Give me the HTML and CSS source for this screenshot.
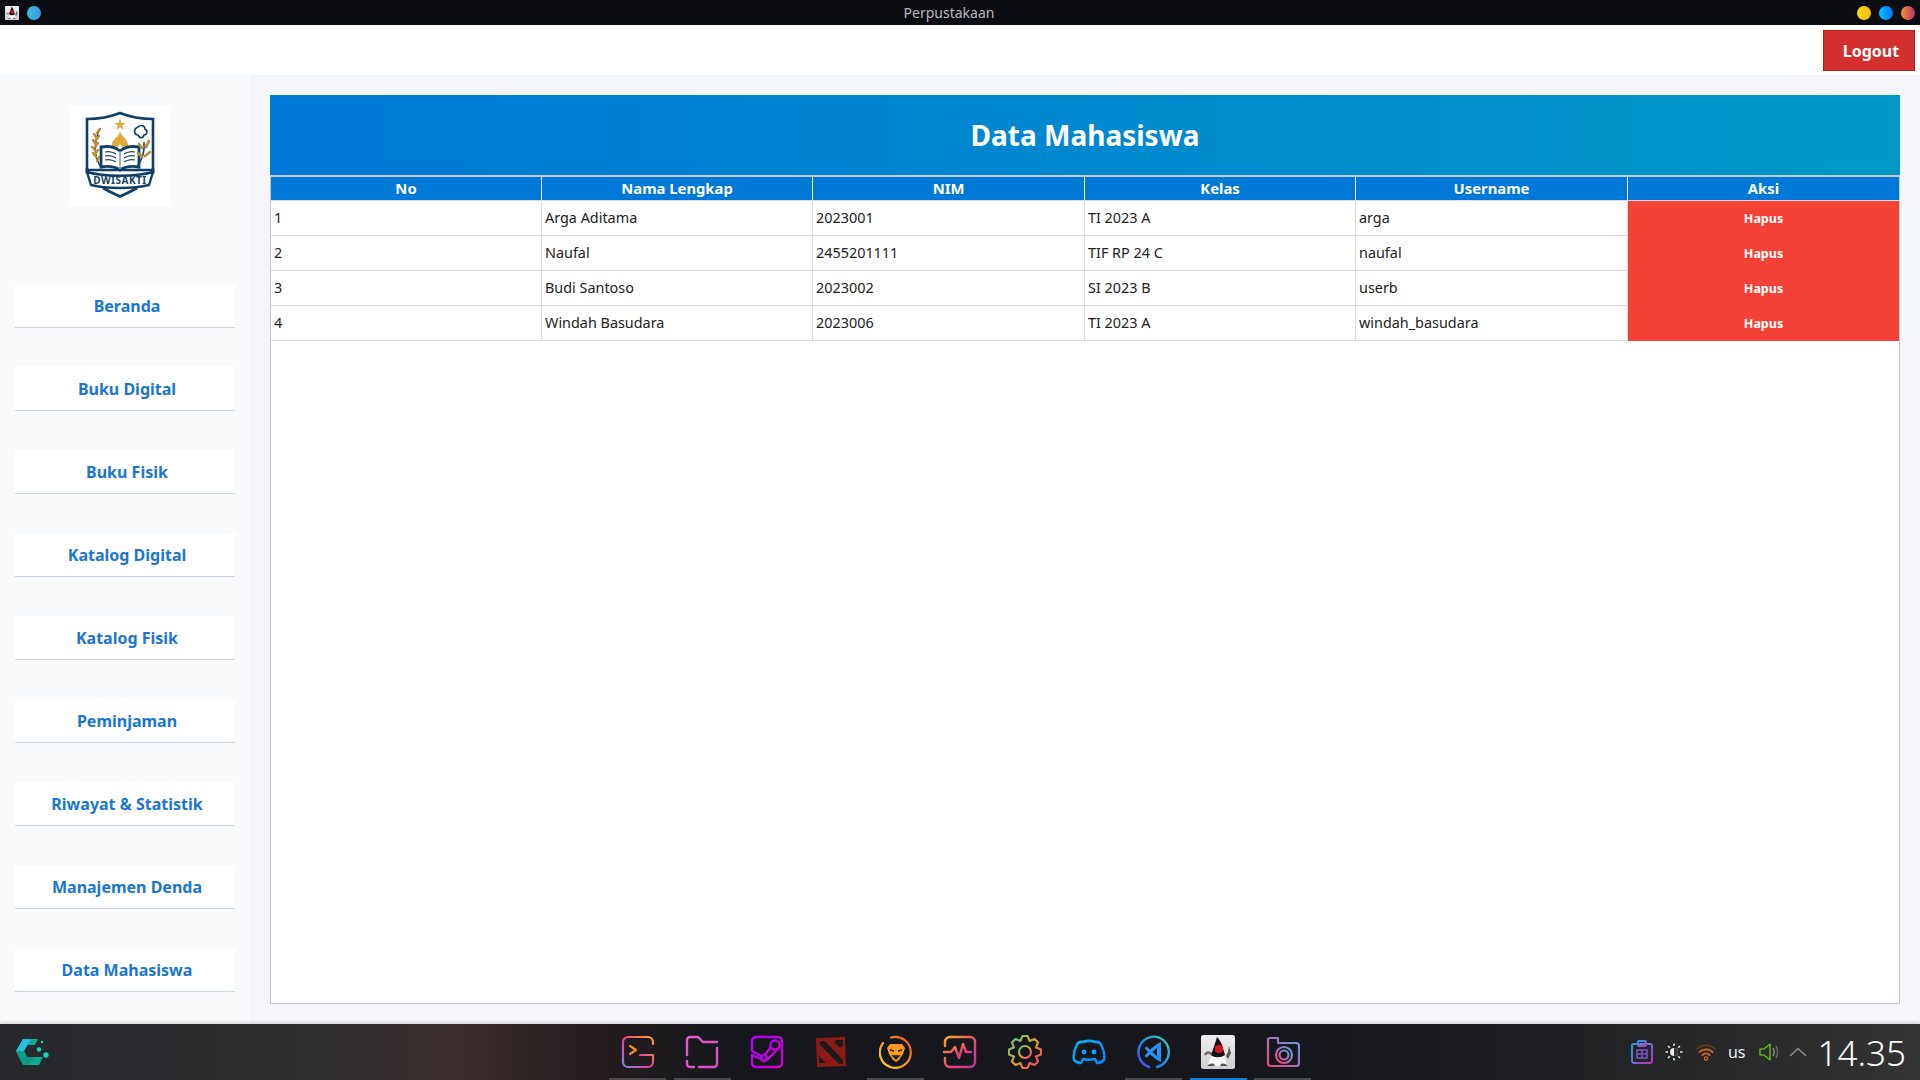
FILE: index.html
```html
<!DOCTYPE html>
<html lang="en">
<head>
    <meta charset="UTF-8">
    <title>Perpustakaan</title>
    <link rel="stylesheet" href="styles.css">
</head>
<body>
    <svg class="svg-defs" aria-hidden="true">
        <defs>
            <linearGradient id="g-term" x1="0" y1="1" x2="1" y2="0"><stop offset="0" stop-color="#7b8cf0"/><stop offset="0.45" stop-color="#e83e9c"/><stop offset="1" stop-color="#f9a825"/></linearGradient>
            <linearGradient id="g-pink" x1="0" y1="0" x2="1" y2="1"><stop offset="0" stop-color="#e85fd0"/><stop offset="1" stop-color="#d94fc0"/></linearGradient>
            <linearGradient id="g-steam" x1="0" y1="0" x2="1" y2="1"><stop offset="0" stop-color="#b400ff"/><stop offset="1" stop-color="#d000d0"/></linearGradient>
            <linearGradient id="g-brave" x1="0" y1="1" x2="1" y2="0"><stop offset="0" stop-color="#fdd835"/><stop offset="1" stop-color="#f4511e"/></linearGradient>
            <linearGradient id="g-pulse" x1="0" y1="0" x2="1" y2="1"><stop offset="0" stop-color="#f9a825"/><stop offset="0.5" stop-color="#f0506e"/><stop offset="1" stop-color="#c2309c"/></linearGradient>
            <linearGradient id="g-gear" x1="0" y1="0" x2="1" y2="1"><stop offset="0" stop-color="#3ecf8e"/><stop offset="0.5" stop-color="#e0a030"/><stop offset="1" stop-color="#f0386b"/></linearGradient>
            <linearGradient id="g-disc" x1="0" y1="0" x2="1" y2="1"><stop offset="0" stop-color="#00b8f0"/><stop offset="1" stop-color="#1080ff"/></linearGradient>
            <linearGradient id="g-code" x1="0" y1="1" x2="1" y2="0"><stop offset="0" stop-color="#5a3df0"/><stop offset="0.5" stop-color="#2090f0"/><stop offset="1" stop-color="#40d0b0"/></linearGradient>
            <linearGradient id="g-cam" x1="0" y1="1" x2="1" y2="0"><stop offset="0" stop-color="#f0457a"/><stop offset="1" stop-color="#5aa0e8"/></linearGradient>
            <linearGradient id="g-clip" x1="0" y1="0" x2="1" y2="1"><stop offset="0" stop-color="#2aa0d8"/><stop offset="1" stop-color="#c030c0"/></linearGradient>
            <linearGradient id="g-face" x1="0" y1="0" x2="0" y2="1"><stop offset="0" stop-color="#eeeeee"/><stop offset="1" stop-color="#cfcfcf"/></linearGradient>
            <symbol id="duke" viewBox="0 0 34 34">
                <rect width="34" height="34" rx="2.500" fill="url(#g-face)"/>
                <path d="M3 19 C5 15.500 9 15.500 11 18 L10 20 C8 18.500 6 18.500 4.500 21 Z" fill="#707070"/>
                <path d="M28 11 L30 18 L27 24 L25 21 L27 17 Z" fill="#555"/>
                <path d="M11 20 C9 25 7 28 6 31 H27 C25 28 24 24 23 20 Z" fill="#f6f6f6"/>
                <path d="M6 31 C8 29 10 28 13 29 L14 31 Z M27 31 C25 29 23 28 20 29 L19 31 Z" fill="#555"/>
                <path d="M16 2 C18 4 20 7 21 10 L24 20 C20 23 13 23 10 20 C12 15 14 8 16 2 Z" fill="#141414"/>
                <circle cx="18" cy="14" r="4.300" fill="#d8101c"/>
            </symbol>
        </defs>
    </svg>

    <div class="titlebar">
        <div class="tb-left">
            <svg class="tb-app"><use href="#duke"/></svg>
            <span class="tb-dot tb-dot-blue"></span>
        </div>
        <div class="tb-title">Perpustakaan</div>
        <div class="tb-right">
            <span class="tb-dot tb-dot-yellow"></span>
            <span class="tb-dot tb-dot-azure"></span>
            <span class="tb-dot tb-dot-red"></span>
        </div>
    </div>

    <div class="header">
        <button class="logout">Logout</button>
    </div>

    <div class="main">
        <div class="sidebar">
            <div class="logo-box">
                <svg class="logo" viewBox="0 0 100 100">
                    <path d="M50 7 C60 11 72 13 83 13 V64 L17 64 V13 C28 13 40 11 50 7 Z" fill="#fff" stroke="#123f68" stroke-width="2.600"/>
                    <path d="M17 62 V68 M83 62 V68" stroke="#123f68" stroke-width="2.600"/>
                    <path d="M50 12.500 L51.400 17 H56 L52.300 19.600 L53.600 24 L50 21.300 L46.400 24 L47.700 19.600 L44 17 H48.600 Z" fill="#e0a93f"/>
                    <path d="M50 25 C51 30 57 32 58 38 C58.500 42 55 44 53 46 C53.500 42 52 40 50 38 C48 40 46.500 42 47 46 C45 44 41.500 42 42 38 C42.500 34 45 34 46 31 C47 32 49 29 50 25 Z" fill="#e0a93f"/>
                    <path d="M50 45 C44 40 37 40 31 41 V61 C37 60 44 60 50 64 C56 60 63 60 69 61 V41 C63 40 56 40 50 45 Z" fill="#fff" stroke="#123f68" stroke-width="2.800"/>
                    <path d="M50 45 V63" stroke="#8aa0b4" stroke-width="1.600"/>
                    <path d="M35 46 C39 45 43 46 46 48 M35 50 C39 49 43 50 46 52 M35 54 C39 53 43 54 46 56 M65 46 C61 45 57 46 54 48 M65 50 C61 49 57 50 54 52 M65 54 C61 53 57 54 54 56" fill="none" stroke="#123f68" stroke-width="1.200"/>
                    <path d="M30 22 C25 34 23 48 30 60" fill="none" stroke="#123f68" stroke-width="1.400"/>
                    <path d="M30 23 L27 27 M24 28 L26 31 M29 30 L26 34 M23 34 L25 37 M28 37 L25 41 M22 41 L25 44 M28 44 L25 48 M23 47 L26 51 M29 51 L27 55" fill="none" stroke="#b98f3a" stroke-width="2.400" stroke-linecap="round"/>
                    <path d="M74 36 C75 46 72 54 67 61" fill="none" stroke="#123f68" stroke-width="1.500"/>
                    <path d="M68 21 C71 18 75 20 75 23 C78 24 77 29 74 29 C73 33 69 32 68 29 C64 29 63 23 68 21 Z" fill="#fff" stroke="#123f68" stroke-width="1.700"/>
                    <path d="M69 38 L72 42 M79 35 L76 41 M80 46 L75 50 M68 47 L72 51" fill="none" stroke="#b98f3a" stroke-width="2.800" stroke-linecap="round"/>
                    <path d="M33 82 C40 86 45 88 50 90.500 C55 88 60 86 67 82" fill="none" stroke="#123f68" stroke-width="2.800"/>
                    <path d="M17 66 C34 71 66 71 83 66 L79 79 C64 83 36 83 21 79 Z" fill="#fff" stroke="#123f68" stroke-width="2.400"/>
                    <text x="50" y="77.500" class="logo-text" text-anchor="middle">DWISAKTI</text>
                </svg>
            </div>
            <nav class="nav">
                <a class="nav-item">Beranda</a>
                <a class="nav-item">Buku Digital</a>
                <a class="nav-item">Buku Fisik</a>
                <a class="nav-item">Katalog Digital</a>
                <a class="nav-item">Katalog Fisik</a>
                <a class="nav-item">Peminjaman</a>
                <a class="nav-item">Riwayat &amp; Statistik</a>
                <a class="nav-item">Manajemen Denda</a>
                <a class="nav-item">Data Mahasiswa</a>
            </nav>
        </div>

        <div class="content">
            <div class="banner"><h1>Data Mahasiswa</h1></div>
            <div class="panel">
                <table>
                    <colgroup>
                        <col class="col-a"><col class="col-a"><col class="col-b"><col class="col-a"><col class="col-b"><col class="col-a">
                    </colgroup>
                    <thead>
                        <tr><th>No</th><th>Nama Lengkap</th><th>NIM</th><th>Kelas</th><th>Username</th><th>Aksi</th></tr>
                    </thead>
                    <tbody>
                        <tr><td>1</td><td>Arga Aditama</td><td>2023001</td><td>TI 2023 A</td><td>arga</td><td class="aksi">Hapus</td></tr>
                        <tr><td>2</td><td>Naufal</td><td>2455201111</td><td>TIF RP 24 C</td><td>naufal</td><td class="aksi">Hapus</td></tr>
                        <tr><td>3</td><td>Budi Santoso</td><td>2023002</td><td>SI 2023 B</td><td>userb</td><td class="aksi">Hapus</td></tr>
                        <tr><td>4</td><td>Windah Basudara</td><td>2023006</td><td>TI 2023 A</td><td>windah_basudara</td><td class="aksi">Hapus</td></tr>
                    </tbody>
                </table>
            </div>
        </div>
    </div>

    <div class="dock">
        <div class="dock-left">
            <svg class="dock-logo" viewBox="0 0 34 26">
                <path d="M0 12 L7 0 H22 L19 6 H11 L8 12 L11 18 H27 L23 26 H7 Z" fill="#12a890"/>
                <path d="M0 12 L7 0 H15 L8 12 Z" fill="#22bfe0"/>
                <path d="M8 12 L11 18 H20 L12 26 H7 L0 12 Z" fill="#0d9a84"/>
                <circle cx="23" cy="10.500" r="2.200" fill="#12d8b8"/>
                <circle cx="30" cy="16" r="2.700" fill="#12d8b8"/>
                <circle cx="26" cy="3" r="1.200" fill="#12d8b8"/>
            </svg>
        </div>
        <div class="dock-apps">
            <div class="app on">
                <svg viewBox="0 0 34 34" fill="none" stroke="url(#g-term)" stroke-width="2.200" stroke-linecap="round" stroke-linejoin="round">
                    <path d="M32 9 V7 A5 5 0 0 0 27 2 H7 A5 5 0 0 0 2 7 V27 A5 5 0 0 0 7 32 H27 A5 5 0 0 0 32 27 V20 H19"/>
                    <path d="M9 11 L15 15 L9 19" stroke="#f58a2a"/>
                </svg>
            </div>
            <div class="app on">
                <svg viewBox="0 0 34 34" fill="none" stroke="url(#g-pink)" stroke-width="2.400" stroke-linecap="round" stroke-linejoin="round">
                    <path d="M2 20 V5 A3 3 0 0 1 5 2 H13 L18 7 H32"/>
                    <path d="M32 13 V29 A3 3 0 0 1 29 32 H14 M9 32 H5 A3 3 0 0 1 2 29 V26"/>
                </svg>
            </div>
            <div class="app">
                <svg viewBox="0 0 34 34" fill="none" stroke="url(#g-steam)" stroke-width="2.400" stroke-linejoin="round">
                    <path d="M2 16 V6 A4 4 0 0 1 6 2 H28 A4 4 0 0 1 32 6 V28 A4 4 0 0 1 28 32 H6 A4 4 0 0 1 2 28 V20 L11 24"/>
                    <circle cx="25" cy="10" r="4.500"/>
                    <circle cx="14" cy="23" r="3"/>
                    <path d="M2 16 L11 21 M21 12 L15 20 M28 14 L17 25"/>
                </svg>
            </div>
            <div class="app">
                <svg viewBox="0 0 34 34">
                    <path d="M2 3 L31 2 L32 31 L3 32 Z" fill="#8e1a16"/>
                    <path d="M7 6 H11 L29 25 V29 H25 L5 9 Z M22 5 H29 V11 L26 13 L20 7 Z M5 21 L8 24 L12 28 H5 Z" fill="#1d1a1c"/>
                </svg>
            </div>
            <div class="app on">
                <svg viewBox="0 0 34 34">
                    <path d="M12 2.500 A15.500 15.500 0 1 1 4 8" fill="none" stroke="url(#g-brave)" stroke-width="2.200" stroke-linecap="round"/>
                    <path d="M11 9 H23 L26 13 L24 19 L20 25 L17 27 L14 25 L10 19 L8 13 Z" fill="#f79a1e"/>
                    <path d="M11 15 L15 16 M23 15 L19 16 M14 21 H20 L17 24 Z" stroke="#26201c" stroke-width="1.400" fill="#26201c"/>
                </svg>
            </div>
            <div class="app">
                <svg viewBox="0 0 34 34" fill="none" stroke="url(#g-pulse)" stroke-width="2.400" stroke-linecap="round" stroke-linejoin="round">
                    <path d="M2 11 V7 A5 5 0 0 1 7 2 H27 A5 5 0 0 1 32 7 V27 A5 5 0 0 1 27 32 H7 A5 5 0 0 1 2 27 V23"/>
                    <path d="M1 17 H8 L12 12 L16 23 L20 9 L23 17 H28"/>
                </svg>
            </div>
            <div class="app">
                <svg viewBox="0 0 34 34" fill="none" stroke="url(#g-gear)" stroke-width="2.200" stroke-linejoin="round">
                    <path d="M12.400 5.900 L14.500 1 H19.500 L21.600 5.900 L26.550 3.920 L30.080 7.450 L28.100 12.400 L33 14.500 V19.500 L28.100 21.600 L30.080 26.550 L26.550 30.080 L21.600 28.100 L19.500 33 H14.500 L12.400 28.100 L7.450 30.080 L3.920 26.550 L5.900 21.600 L1 19.500 V14.500 L5.900 12.400 L3.920 7.450 L7.450 3.920 Z"/>
                    <circle cx="17" cy="17" r="6"/>
                </svg>
            </div>
            <div class="app">
                <svg viewBox="0 0 34 34" fill="none" stroke="url(#g-disc)" stroke-width="2.500" stroke-linejoin="round">
                    <path d="M11 7 C15 5.500 19 5.500 23 7 C26 6.500 27.500 7 29 9.500 C32 15 33 20 32 25 C30 27 27 28 25 28 L23 24 C19 25 15 25 11 24 L9 28 C7 28 4 27 2 25 C1 20 2 15 5 9.500 C6.500 7 8 6.500 11 7 Z"/>
                    <circle cx="12" cy="17" r="2.400" fill="#10a0f8" stroke="none"/>
                    <circle cx="22" cy="17" r="2.400" fill="#10a0f8" stroke="none"/>
                </svg>
            </div>
            <div class="app on">
                <svg viewBox="0 0 34 34">
                    <path d="M12 32 A15.500 15.500 0 0 1 22 2.500 A15.500 15.500 0 0 1 20 32" fill="none" stroke="url(#g-code)" stroke-width="2.400" stroke-linecap="round"/>
                    <path d="M24 7 V27 L20 25 L13 19.500 L9.500 22.500 L7.500 21 L11 17 L7.500 13 L9.500 11.500 L13 14.500 L20 9 Z M20 13 L15.500 17 L20 21 Z" fill="#2a90f0" fill-rule="evenodd"/>
                </svg>
            </div>
            <div class="app on-blue">
                <svg viewBox="0 0 34 34"><use href="#duke"/></svg>
            </div>
            <div class="app on">
                <svg viewBox="0 0 34 34" fill="none" stroke="url(#g-cam)" stroke-width="2.200" stroke-linejoin="round">
                    <path d="M2 9 V5 A2 2 0 0 1 4 3 H12 V8 H30 A3 3 0 0 1 33 11 V28 A3 3 0 0 1 30 31 H5 A3 3 0 0 1 2 28 Z"/>
                    <circle cx="18" cy="20" r="8"/>
                    <circle cx="18" cy="20" r="4.500"/>
                    <path d="M6 13 H11"/>
                </svg>
            </div>
        </div>
        <div class="dock-tray">
            <svg class="tray-clip" viewBox="0 0 22 24" fill="none" stroke="url(#g-clip)" stroke-width="2">
                <rect x="1" y="4" width="20" height="19" rx="2"/>
                <rect x="7" y="1" width="8" height="5" rx="1"/>
                <path d="M6 10 H16 V18 H6 Z M11 10 V18 M6 14 H16" stroke-width="1.500" stroke="#7a55c8"/>
            </svg>
            <svg class="tray-sun" viewBox="0 0 18 18">
                <circle cx="9" cy="9" r="4" fill="#e8e8e8"/>
                <path d="M9 5 A4 4 0 0 1 9 13 Z" fill="#333"/>
                <path d="M9 0.500 V3 M9 15 V17.500 M0.500 9 H3 M15 9 H17.500 M3 3 L4.800 4.800 M13.200 13.200 L15 15 M3 15 L4.800 13.200 M13.200 4.800 L15 3" stroke="#e8e8e8" stroke-width="1.500"/>
            </svg>
            <svg class="tray-wifi" viewBox="0 0 20 18" fill="none" stroke-linecap="round">
                <path d="M1 6 C6 1 14 1 19 6" stroke="#6a3a1c" stroke-width="1.500"/>
                <path d="M3.500 9 C7 5.500 13 5.500 16.500 9" stroke="#d9661f" stroke-width="1.800"/>
                <path d="M6.500 12 C8.500 10 11.500 10 13.500 12" stroke="#d9661f" stroke-width="1.800"/>
                <circle cx="10" cy="15.500" r="1.600" fill="none" stroke="#d9661f" stroke-width="1.200"/>
            </svg>
            <span class="tray-lang">us</span>
            <svg class="tray-vol" viewBox="0 0 20 18" fill="none" stroke-linejoin="round">
                <path d="M1 6 H5 L11 1 V17 L5 12 H1 Z" stroke="#5fae1f" stroke-width="1.600"/>
                <path d="M14 5 C15.500 7 15.500 11 14 13" stroke="#8a8a8a" stroke-width="1.500"/>
                <path d="M17 3 C19 6 19 12 17 15" stroke="#6a6a6a" stroke-width="1.500"/>
            </svg>
            <svg class="tray-chev" viewBox="0 0 18 10" fill="none">
                <path d="M1 9 L9 1.500 L17 9" stroke="#8c8c8c" stroke-width="1.600"/>
            </svg>
            <span class="tray-clock">14.35</span>
        </div>
    </div>
</body>
</html>
```

FILE: styles.css
```css
* {
    box-sizing: border-box;
}
html, body {
    margin: 0;
    height: 100%;
}
body {
    font-family: "Noto Sans", sans-serif;
    display: flex;
    flex-direction: column;
    height: 1080px;
    overflow: hidden;
    background: #f5f6fa;
}
.svg-defs {
    width: 0;
    height: 0;
    position: absolute;
}

/* window title bar */
.titlebar {
    height: 25px;
    flex: none;
    background: #0c0d12;
    display: grid;
    grid-template-columns: 1fr auto 1fr;
    align-items: center;
    padding: 0 5px;
}
.tb-left, .tb-right {
    display: flex;
    align-items: center;
    gap: 8px;
}
.tb-right {
    justify-content: flex-end;
}
.tb-app {
    width: 14px;
    height: 14px;
}
.tb-dot {
    width: 14px;
    height: 14px;
    border-radius: 50%;
}
.tb-dot-blue {
    background: linear-gradient(90deg, #2cc5d8, #4a90e8);
}
.tb-dot-yellow {
    background: linear-gradient(90deg, #ffe000, #f5b81f);
}
.tb-dot-azure {
    background: linear-gradient(90deg, #00c6ff, #0072ff);
}
.tb-dot-red {
    background: linear-gradient(90deg, #f7971e, #b0307a);
}
.tb-title {
    color: #b8b8b8;
    font-size: 14px;
    margin-right: 22px;
    padding-bottom: 1px;
}

/* top header */
.header {
    height: 50px;
    flex: none;
    background: #fff;
    display: flex;
    justify-content: flex-end;
    align-items: flex-start;
    padding: 5px 5px 0 0;
}
.logout {
    width: 92px;
    height: 41px;
    background: #d32f2f;
    color: #fff;
    border: 1px solid #b71c1c;
    font-family: inherit;
    font-size: 16px;
    font-weight: 700;
    padding: 0 0 0 4px;
}

.main {
    flex: 1;
    display: flex;
    min-height: 0;
}

/* sidebar */
.sidebar {
    width: 250px;
    flex: none;
    background: #f9fafb;
    padding: 31px 15px 0;
}
.logo-box {
    width: 100px;
    height: 100px;
    margin-left: 55px;
    background: #fff;
}
.logo {
    display: block;
    width: 100px;
    height: 100px;
}
.logo-text {
    font-family: "Noto Sans", sans-serif;
    font-size: 10px;
    font-weight: 700;
    letter-spacing: 0.5px;
    fill: #123f68;
}
.nav {
    margin-top: 78px;
    display: flex;
    flex-direction: column;
    gap: 39px;
}
.nav-item {
    height: 44px;
    background: #fff;
    border-bottom: 1px solid #cbd5e1;
    color: #1976d2;
    font-size: 16px;
    font-weight: 700;
    display: flex;
    align-items: center;
    justify-content: center;
    padding-left: 4px;
}

/* main content */
.content {
    flex: 1;
    padding: 20px;
    display: flex;
    flex-direction: column;
    min-width: 0;
}
.banner {
    height: 80px;
    flex: none;
    background: linear-gradient(90deg, #0078d7, #0099c6);
    display: flex;
    align-items: center;
    justify-content: center;
}
.banner h1 {
    margin: 0;
    color: #fff;
    font-size: 28px;
    font-weight: 700;
}
.panel {
    flex: 1;
    background: #fff;
    border: 1px solid #c8c8c8;
    border-top-width: 2px;
}
table {
    width: 100%;
    table-layout: fixed;
    border-collapse: separate;
    border-spacing: 0;
    font-size: 14.4px;
    color: #222;
}
.col-a {
    width: 271px;
}
.col-b {
    width: 272px;
}
th {
    height: 24px;
    padding: 0 0 2px;
    background: #0078d7;
    color: #fff;
    font-size: 14.8px;
    font-weight: 700;
    border-right: 1px solid #fff;
    border-bottom: 1px solid #ddd;
}
th:last-child, td:last-child {
    border-right: 0;
}
td {
    height: 35px;
    padding: 0 3px 2px;
    border-right: 1px solid #ddd;
    border-bottom: 1px solid #ddd;
}
td.aksi {
    background: #f44336;
    border-bottom-color: #f44336;
    color: #fff;
    font-size: 12.5px;
    font-weight: 700;
    text-align: center;
    padding-bottom: 0;
}

/* desktop dock */
.dock {
    height: 56px;
    flex: none;
    display: grid;
    grid-template-columns: 1fr auto 1fr;
    align-items: center;
    background: linear-gradient(90deg, #26282c 0%, #2e2e30 15%, #3a2e2c 24%, #241c1e 31%, #15171c 38%, #15171c 68%, #1e1f22 80%, #333333 100%);
    box-shadow: 0 -2px 3px rgba(0, 0, 0, 0.12);
}
.dock-left {
    padding-left: 16px;
    display: flex;
}
.dock-logo {
    width: 34px;
    height: 26px;
}
.dock-apps {
    display: flex;
    height: 100%;
    gap: 7.500px;
}
.app {
    width: 57px;
    height: 100%;
    display: flex;
    align-items: center;
    justify-content: center;
    border-top: 2px solid transparent;
    border-bottom: 2px solid transparent;
}
.app svg {
    width: 34px;
    height: 34px;
}
.app.on {
    border-bottom-color: #4a4a4a;
}
.app.on-blue {
    border-bottom-color: #1080d8;
}
.dock-tray {
    display: flex;
    justify-content: flex-end;
    align-items: center;
    padding-right: 14px;
    color: #eee;
}
.tray-clip {
    width: 22px;
    height: 24px;
    margin-right: 12px;
}
.tray-sun {
    width: 18px;
    height: 18px;
    margin-right: 13px;
}
.tray-wifi {
    width: 20px;
    height: 18px;
    margin-right: 12px;
}
.tray-lang {
    font-size: 16px;
    margin-right: 13px;
}
.tray-vol {
    width: 20px;
    height: 18px;
    margin-right: 10px;
}
.tray-chev {
    width: 18px;
    height: 10px;
    margin-right: 11px;
}
.tray-clock {
    font-size: 35px;
    font-weight: 300;
    color: #fff;
    line-height: 1;
}
```
